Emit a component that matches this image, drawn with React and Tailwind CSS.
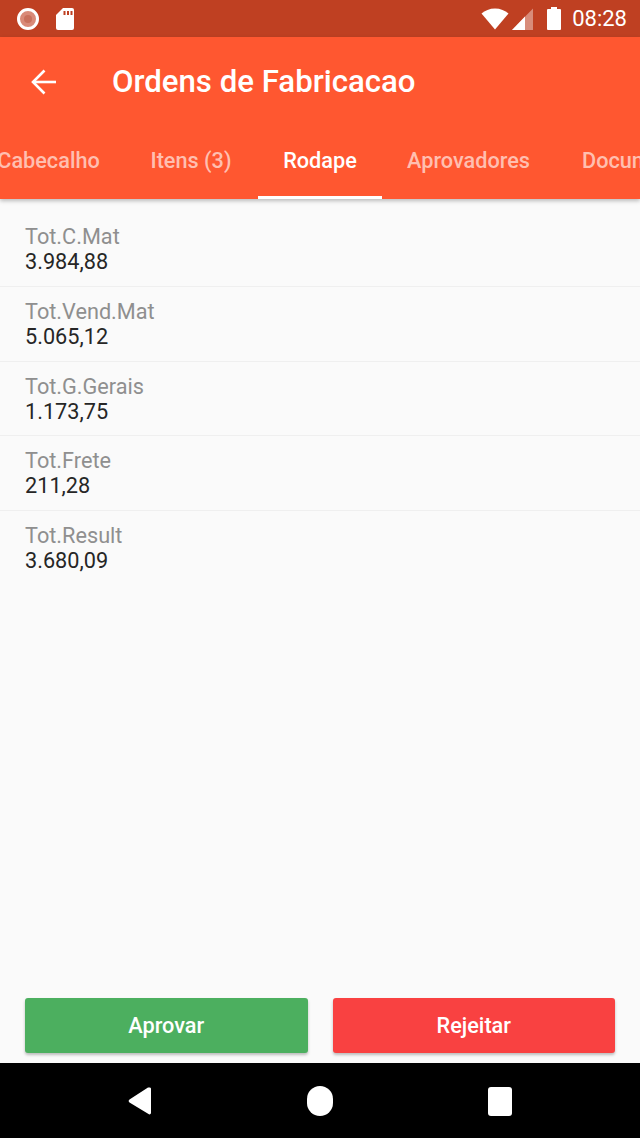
import React from "react";

const rows = [
  { label: "Tot.C.Mat", value: "3.984,88" },
  { label: "Tot.Vend.Mat", value: "5.065,12" },
  { label: "Tot.G.Gerais", value: "1.173,75" },
  { label: "Tot.Frete", value: "211,28" },
  { label: "Tot.Result", value: "3.680,09" },
];

const StatusBar = () => (
  <div className="h-[37px] shrink-0 bg-[#bf4022] flex items-center pl-[17px] pr-[13px]">
    <div className="w-[22px] h-[22px] rounded-full border-[3px] border-white bg-[#d98a78] flex items-center justify-center">
      <div className="w-[8px] h-[8px] rounded-full bg-[#c9705c]" />
    </div>
    <svg width="18" height="22" viewBox="0 0 18 22" className="ml-[17px]">
      <path d="M7 0h9a2 2 0 0 1 2 2v18a2 2 0 0 1-2 2H2a2 2 0 0 1-2-2V7z" fill="#fff" />
      <rect x="7.500" y="3" width="2" height="4" fill="#bf4022" />
      <rect x="11" y="3" width="2" height="4" fill="#bf4022" />
      <rect x="14.500" y="3" width="2" height="4" fill="#bf4022" />
    </svg>
    <div className="flex-1" />
    <svg width="28" height="22" viewBox="0 0 28 22">
      <path d="M14 21.500 0.500 5.500C4 2.500 8.500 0.500 14 0.500s10 2 13.500 5z" fill="#fff" />
    </svg>
    <svg width="22" height="22" viewBox="0 0 22 22" className="ml-[3px]">
      <path d="M21 0.500V22H0z" fill="#fff" fillOpacity="0.4" />
      <path d="M13 8.500V22H0z" fill="#fff" />
    </svg>
    <svg width="14" height="23" viewBox="0 0 14 23" className="ml-[13px]">
      <path d="M4 0h6v2h3a1 1 0 0 1 1 1v19a1 1 0 0 1-1 1H1a1 1 0 0 1-1-1V3a1 1 0 0 1 1-1h3z" fill="#fff" />
    </svg>
    <span className="ml-[11px] text-[22px] leading-none text-white">08:28</span>
  </div>
);

const AppHeader = () => (
  <div className="shrink-0 bg-[#ff5730] shadow-[0_2px_4px_rgba(0,0,0,0.25)] z-10">
    <div className="h-[89px] flex items-center pl-[31px]">
      <svg width="25" height="26" viewBox="0 0 25 26" fill="none" stroke="#fff" strokeWidth="2.600">
        <path d="M25 13H2" />
        <path d="M13.500 1.500 2 13l11.500 11.500" />
      </svg>
      <span className="ml-[56px] text-[31.200px] leading-none font-medium text-white">Ordens de Fabricacao</span>
    </div>
    <div className="h-[73px] flex overflow-hidden text-[21.700px] font-medium text-[#ffbfb0]">
      <div className="w-[147px] ml-[-25px] shrink-0 flex items-center justify-center pb-[3px]">Cabecalho</div>
      <div className="w-[136px] pl-[2px] shrink-0 flex items-center justify-center pb-[3px]">Itens (3)</div>
      <div className="w-[124px] shrink-0 flex items-center justify-center text-white border-b-[3px] border-white">Rodape</div>
      <div className="w-[173px] shrink-0 flex items-center justify-center pb-[3px]">Aprovadores</div>
      <div className="ml-[27px] shrink-0 flex items-center pb-[3px]">Documentos</div>
    </div>
  </div>
);

const Row = ({ label, value }) => (
  <div className="h-[74.750px] pl-[25px] pt-[12px] border-b border-[#efefef] last:border-b-0">
    <div className="text-[21.700px] leading-[25px] text-[#8f8f8f]">{label}</div>
    <div className="text-[21.700px] leading-[25px] text-[#262626]">{value}</div>
  </div>
);

export default function App() {
  return (
    <div className="w-[640px] h-[1138px] flex flex-col bg-[#fafafa] overflow-hidden font-['Roboto',sans-serif]">
      <StatusBar />
      <AppHeader />

      <div className="flex-1 pt-[13px]">
        {rows.map((r) => (
          <Row key={r.label} label={r.label} value={r.value} />
        ))}
      </div>

      <div className="h-[65px] shrink-0 flex gap-[25px] px-[25px]">
        <button className="flex-1 h-[55px] pt-[2px] rounded-[3px] bg-[#4caf5f] text-white text-[21.700px] font-medium shadow-[0_2px_3px_rgba(0,0,0,0.25)]">
          Aprovar
        </button>
        <button className="flex-1 h-[55px] pt-[2px] rounded-[3px] bg-[#f94141] text-white text-[21.700px] font-medium shadow-[0_2px_3px_rgba(0,0,0,0.25)]">
          Rejeitar
        </button>
      </div>

      <div className="h-[75px] shrink-0 bg-black relative">
        <svg width="24" height="30" viewBox="0 0 24 30" className="absolute left-[128px] top-[23px]">
          <path d="M22 1.500a1.500 1.500 0 0 1 1 1.500v24a1.500 1.500 0 0 1-2.500 1L1.500 16.500a2 2 0 0 1 0-3L20 1.500z" fill="#fff" />
        </svg>
        <div className="absolute left-[307px] top-[23px] w-[26px] h-[30px] rounded-full bg-white" />
        <div className="absolute left-[488px] top-[24px] w-[24px] h-[29px] rounded-[3px] bg-white" />
      </div>
    </div>
  );
}
